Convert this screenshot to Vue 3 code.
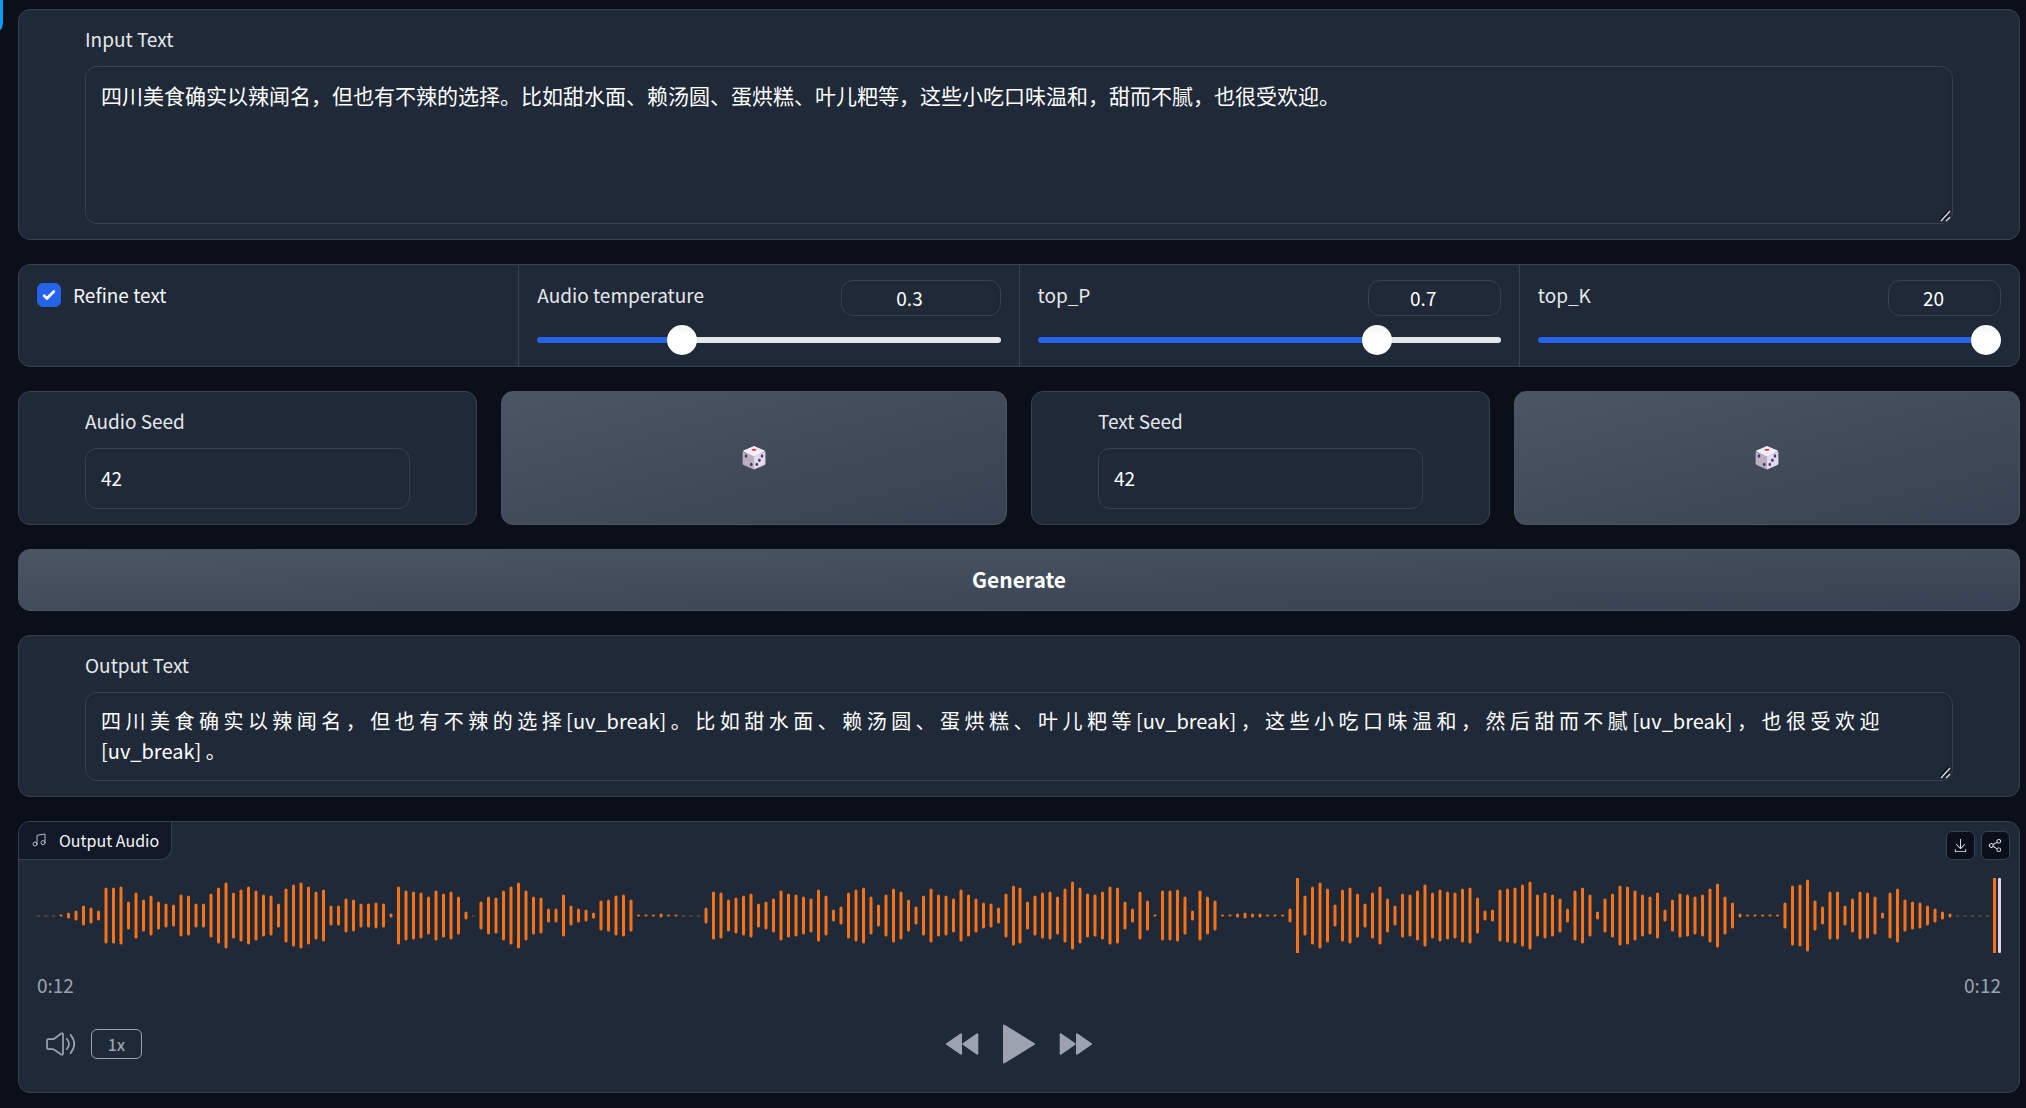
<script setup>
import { ref } from 'vue'

const inputText = ref('四川美食确实以辣闻名，但也有不辣的选择。比如甜水面、赖汤圆、蛋烘糕、叶儿粑等，这些小吃口味温和，甜而不腻，也很受欢迎。')
const outputText = ref('四 川 美 食 确 实 以 辣 闻 名 ， 但 也 有 不 辣 的 选 择 [uv_break] 。 比 如 甜 水 面 、 赖 汤 圆 、 蛋 烘 糕 、 叶 儿 粑 等 [uv_break] ， 这 些 小 吃 口 味 温 和 ， 然 后 甜 而 不 腻 [uv_break] ， 也 很 受 欢 迎 [uv_break] 。')
const refine = ref(true)
const sliders = ref([
  { id: 'temperature', label: 'Audio temperature', value: 0.3, min: 0, max: 1, step: 0.1, size: 'wide' },
  { id: 'top-p', label: 'top_P', value: 0.7, min: 0.1, max: 0.9, step: 0.1, size: 'medium' },
  { id: 'top-k', label: 'top_K', value: 20, min: 1, max: 20, step: 1, size: 'narrow' },
])
const seeds = ref([
  { id: 'audio-seed', label: 'Audio Seed', value: 42 },
  { id: 'text-seed', label: 'Text Seed', value: 42 },
])
const roll = (seed) => { seed.value = Math.floor(Math.random() * 100000000) }
const fill = (s) => `${((s.value - s.min) / (s.max - s.min)) * 100}%`

// Half-height of every bar; 0 is silence.
const peaks = [
  0, 0, 0, 1, 3, 5, 10, 8, 5, 28, 28, 29, 14, 23, 16, 20, 14, 12, 11, 21, 20, 12, 12, 22, 28, 33, 23, 26, 29, 25,
  21, 20, 12, 27, 31, 33, 29, 24, 26, 10, 10, 17, 16, 12, 12, 13, 12, 2, 29, 25, 24, 23, 19, 25, 22, 24, 19, 4, 0, 14,
  19, 18, 25, 29, 33, 25, 19, 18, 7, 7, 21, 10, 7, 6, 3, 15, 16, 20, 21, 16, 1, 1, 1, 2, 1, 1, 0, 0, 0, 8,
  24, 23, 16, 18, 20, 22, 12, 14, 17, 25, 22, 21, 19, 17, 26, 20, 6, 9, 23, 26, 28, 19, 11, 21, 27, 24, 16, 9, 20, 27,
  21, 20, 17, 26, 21, 17, 13, 12, 8, 22, 30, 28, 14, 20, 23, 24, 19, 27, 34, 28, 22, 21, 24, 29, 28, 14, 7, 24, 15, 1,
  25, 25, 26, 19, 5, 25, 19, 15, 1, 1, 2, 3, 2, 2, 1, 1, 1, 7, 38, 20, 29, 33, 27, 11, 26, 28, 22, 12, 23, 29,
  17, 10, 22, 21, 25, 31, 23, 26, 24, 23, 27, 28, 18, 5, 6, 26, 27, 28, 31, 34, 21, 23, 21, 17, 7, 25, 28, 21, 4, 17,
  22, 30, 29, 25, 21, 19, 23, 6, 16, 22, 21, 19, 21, 27, 32, 19, 13, 2, 1, 1, 1, 1, 1, 13, 30, 31, 36, 15, 9, 24,
  24, 10, 17, 24, 23, 19, 3, 23, 27, 16, 14, 13, 10, 7, 4, 2, 0, 0, 0, 0, 0, 38,
]
const tile = 131
const barX = (i) => (i < tile ? i * 7.5 : i === peaks.length - 1 ? 1956 : 981.5 + (i - tile) * 7.5)
</script>

<template>
  <main class="app">
    <span class="edge" aria-hidden="true"></span>

    <section class="card text-card">
      <label class="label" for="input-text">Input Text</label>
      <textarea id="input-text" v-model="inputText" class="field area input-area" spellcheck="false"></textarea>
    </section>

    <section class="card settings">
      <div class="cell">
        <label class="check">
          <input v-model="refine" type="checkbox" />
          <span>Refine text</span>
        </label>
      </div>
      <div v-for="s in sliders" :key="s.id" class="cell">
        <div class="cell-head">
          <label class="label" :for="s.id">{{ s.label }}</label>
          <input v-model.number="s.value" class="field number" :class="s.size" type="number" :min="s.min" :max="s.max" :step="s.step" :aria-label="s.label + ' value'" />
        </div>
        <input :id="s.id" v-model.number="s.value" class="range" type="range" :min="s.min" :max="s.max" :step="s.step" :style="{ '--fill': fill(s) }" />
      </div>
    </section>

    <section class="seeds">
      <template v-for="seed in seeds" :key="seed.id">
        <div class="card text-card">
          <label class="label" :for="seed.id">{{ seed.label }}</label>
          <input :id="seed.id" v-model="seed.value" class="field seed" type="text" />
        </div>
        <button class="button" type="button" :aria-label="'Randomize ' + seed.label" @click="roll(seed)">
          <svg class="die" viewBox="0 0 24 24" width="24" height="24">
            <path d="M12 0.5 22.5 5 12 10.5 1.5 5Z" fill="#f6effa" stroke="#f6effa" stroke-linejoin="round" />
            <path d="M.6 5.4 12 10.4V23.6L1.6 19Q.6 18.5 .6 17.5Z" fill="#b9afbf" />
            <path d="M23.4 5.4 12 10.4V23.6L22.4 19Q23.4 18.5 23.4 17.5Z" fill="#e2d9ec" />
            <ellipse cx="12" cy="3.8" rx="2.4" ry="1.1" fill="#f0383c" />
            <g fill="#4a3a72">
              <ellipse cx="4" cy="10" rx="1.3" ry="1.7" />
              <ellipse cx="9.2" cy="18.4" rx="1.3" ry="1.7" />
              <ellipse cx="20" cy="10" rx="1.3" ry="1.7" />
              <ellipse cx="17.4" cy="14.2" rx="1.3" ry="1.7" />
              <ellipse cx="14.8" cy="18.4" rx="1.3" ry="1.7" />
            </g>
          </svg>
        </button>
      </template>
    </section>

    <button class="button generate" type="button">Generate</button>

    <section class="card text-card">
      <label class="label" for="output-text">Output Text</label>
      <textarea id="output-text" v-model="outputText" class="field area output-area" spellcheck="false"></textarea>
    </section>

    <section class="card audio">
      <header class="audio-head">
        <h2 class="tag">
          <svg viewBox="0 0 24 24" width="16" height="16" fill="none" stroke="currentColor" stroke-width="1.5" stroke-linecap="round" stroke-linejoin="round">
            <path d="M9 18V5l12-2v13" /><circle cx="6" cy="18" r="3" /><circle cx="18" cy="16" r="3" />
          </svg>
          Output Audio
        </h2>
        <div class="tools">
          <button type="button" aria-label="Download">
            <svg viewBox="0 0 32 32" width="15" height="15" fill="currentColor">
              <path d="M26 24v4H6v-4H4v4a2 2 0 0 0 2 2h20a2 2 0 0 0 2-2v-4zM26 14l-1.41-1.41L17 20.17V2h-2v18.17l-7.59-7.58L6 14l10 10 10-10z" />
            </svg>
          </button>
          <button type="button" aria-label="Share">
            <svg viewBox="0 0 32 32" width="15" height="15" fill="currentColor">
              <path d="M23 20a5 5 0 0 0-3.89 1.89l-7.31-4.57a4.46 4.46 0 0 0 0-2.64l7.31-4.57A5 5 0 1 0 18 7a4.79 4.79 0 0 0 .2 1.32l-7.31 4.57a5 5 0 1 0 0 6.22l7.31 4.57A4.79 4.79 0 0 0 18 25a5 5 0 1 0 5-5zm0-16a3 3 0 1 1-3 3 3 3 0 0 1 3-3zM7 19a3 3 0 1 1 3-3 3 3 0 0 1-3 3zm16 9a3 3 0 1 1 3-3 3 3 0 0 1-3 3z" />
            </svg>
          </button>
        </div>
      </header>

      <svg class="wave" viewBox="0 0 1964 75" preserveAspectRatio="none" role="img" aria-label="Waveform">
        <rect v-for="(p, i) in peaks" :key="i" :x="barX(i)" :y="p ? 37.5 - p : 37.5" width="3" :height="p ? p * 2 : 1" :rx="p && p < 38 ? 1.5 : 0" :opacity="p ? 1 : 0.6" fill="#f97316" />
        <rect x="1961" y="0" width="3" height="75" rx="1" fill="#ddd6ee" />
      </svg>

      <div class="times"><time>0:12</time><time>0:12</time></div>

      <div class="controls">
        <div class="left">
          <button class="icon" type="button" aria-label="Volume">
            <svg viewBox="0 0 32 24" width="32" height="24" fill="none" stroke="currentColor" stroke-width="1.7" stroke-linecap="round" stroke-linejoin="round">
              <path d="M2 8.6Q2 7.2 3.4 7.2H8.5L16.2 1.5Q18 .8 18 2.4V21.6Q18 23.2 16.2 22.5L8.5 17.2H3.4Q2 17.2 2 15.8ZM21.8 6.8Q26 12 21.8 17.2M25.5 2.8Q33 12 25.5 21.2" />
            </svg>
          </button>
          <button class="speed" type="button">1x</button>
        </div>
        <div class="transport">
          <button class="icon" type="button" aria-label="Skip backward">
            <svg viewBox="0 0 34 24" width="34" height="24" fill="currentColor" stroke="currentColor" stroke-width="2" stroke-linejoin="round">
              <path d="M16 2.2V21.8L2 12ZM32.3 2.2V21.8L18.3 12Z" />
            </svg>
          </button>
          <button class="icon" type="button" aria-label="Play">
            <svg viewBox="0 0 32 40" width="32" height="40" fill="currentColor" stroke="currentColor" stroke-width="2" stroke-linejoin="round">
              <path d="M1 1.6V38.4L31 20Z" />
            </svg>
          </button>
          <button class="icon" type="button" aria-label="Skip forward">
            <svg viewBox="0 0 34 24" width="34" height="24" fill="currentColor" stroke="currentColor" stroke-width="2" stroke-linejoin="round">
              <path d="M1.7 2.2V21.8L15.7 12ZM18 2.2V21.8L32 12Z" />
            </svg>
          </button>
        </div>
        <div class="right"></div>
      </div>
    </section>
  </main>
</template>

<style>
body {
  background: #0b0f19;
}
</style>

<style scoped>
.app {
  position: relative;
  display: flex;
  flex-direction: column;
  gap: 24px;
  padding: 9px 6px 15px 18px;
  color: #fff;
  font: 19px/30px "Noto Sans CJK SC", "Noto Sans", sans-serif;
}
.app * {
  box-sizing: border-box;
}
.edge {
  position: absolute;
  top: 0;
  left: 0;
  width: 3px;
  height: 30px;
  background: #0c9cfc;
  border-bottom-right-radius: 3px 9px;
}
button,
input,
textarea {
  margin: 0;
  font: inherit;
  color: inherit;
}
button {
  padding: 0;
  cursor: pointer;
}
.card {
  background: #1f2937;
  border: 1px solid #374151;
  border-radius: 12px;
}
.label {
  display: block;
  color: #e5e7eb;
}
.text-card {
  display: flex;
  flex-direction: column;
  gap: 12px;
  padding: 14px 66px 15px;
}
.field {
  background: #1f2937;
  border: 1px solid #374151;
  border-radius: 12px;
  outline: none;
  box-shadow: inset 0 2px 4px rgba(0, 0, 0, 0.05);
}
.area {
  display: block;
  width: 100%;
  padding: 13px 15px;
  resize: vertical;
  overflow: hidden;
}
.area::-webkit-scrollbar {
  width: 15px;
  height: 15px;
}
.area::-webkit-resizer {
  background: url("data:image/svg+xml,%3Csvg viewBox='0 0 15 15' xmlns='http://www.w3.org/2000/svg' fill='none'%3E%3Cpath d='M3 12 12 2M8 12l4-4' stroke='%230b0f19' stroke-width='2'/%3E%3Cpath d='M4 13 13 3M9 13l4-4' stroke='%23d1d5db' stroke-width='1.5'/%3E%3C/svg%3E") center / 15px no-repeat;
}
.input-area {
  height: 158px;
  font-size: 21px;
  line-height: 30px;
}
.output-area {
  height: 89px;
  font-size: 20px;
  line-height: 30px;
}

.settings {
  display: flex;
  height: 103px;
}
.cell {
  flex: 1;
  padding: 15px 18px;
}
.cell + .cell {
  border-left: 1px solid #374151;
}
.check {
  display: flex;
  align-items: center;
  gap: 12px;
  color: #f3f4f6;
}
.check input {
  appearance: none;
  width: 24px;
  height: 24px;
  border-radius: 6px;
  border: 1px solid #374151;
}
.check input:checked {
  border-color: #2563eb;
  background: #2563eb url("data:image/svg+xml,%3Csvg viewBox='0 0 16 16' fill='white' xmlns='http://www.w3.org/2000/svg'%3E%3Cpath d='M12.207 4.793a1 1 0 010 1.414l-5 5a1 1 0 01-1.414 0l-2-2a1 1 0 011.414-1.414L6.5 9.086l4.293-4.293a1 1 0 011.414 0z'/%3E%3C/svg%3E") center / 100%;
}
.cell-head {
  display: flex;
  justify-content: space-between;
  align-items: flex-start;
}
.number {
  height: 36px;
  padding: 0 22px 2px 0;
  text-align: center;
  appearance: textfield;
}
.number::-webkit-inner-spin-button {
  display: none;
}
.wide {
  width: 160px;
}
.medium {
  width: 133px;
}
.narrow {
  width: 113px;
}
.range {
  display: block;
  appearance: none;
  width: 100%;
  height: 30px;
  margin-top: 9px;
  background: none;
}
.range::-webkit-slider-runnable-track {
  height: 6px;
  border-radius: 3px;
  background: linear-gradient(to right, #2563eb var(--fill), #e5e7eb var(--fill));
}
.range::-webkit-slider-thumb {
  appearance: none;
  width: 30px;
  height: 30px;
  margin-top: -12px;
  border-radius: 50%;
  background: linear-gradient(#f4f4f4, #fff 40%);
  box-shadow: 0 0 1px rgba(0, 0, 0, 0.4);
}

.seeds {
  display: grid;
  grid-template-columns: 49fr 54fr 49fr 54fr;
  gap: 24px;
}
.seed {
  width: 100%;
  height: 61px;
  padding: 0 15px 2px;
}
.button {
  display: flex;
  align-items: center;
  justify-content: center;
  border: 1px solid #4b5563;
  border-radius: 12px;
  background: linear-gradient(to bottom right, #4b5563, #374151);
}
.generate {
  height: 62px;
  padding-bottom: 2px;
  font-size: 21px;
  font-weight: 700;
}

.audio-head {
  display: flex;
  justify-content: space-between;
  align-items: flex-start;
  height: 56px;
}
.tag {
  display: flex;
  align-items: center;
  gap: 12px;
  height: 38px;
  margin: 0;
  padding: 0 12px 1px;
  background: #111827;
  border: solid #374151;
  border-width: 0 1px 1px 0;
  border-radius: 11px 0 12px 0;
  color: #f3f4f6;
  font-size: 16px;
  font-weight: 400;
}
.tag svg {
  color: #b6bbc5;
}
.tools {
  display: flex;
  gap: 6px;
  padding: 9px;
}
.tools button {
  display: grid;
  place-items: center;
  width: 29px;
  height: 29px;
  background: #0b0f19;
  border: 1px solid #374151;
  border-radius: 6px;
  color: #e5e7eb;
}
.audio {
  color: #9ca3af;
}
.wave {
  display: block;
  width: calc(100% - 36px);
  height: 75px;
  margin: 0 18px;
}
.times {
  display: flex;
  justify-content: space-between;
  padding: 0 18px;
  margin-top: 17px;
}
.controls {
  display: flex;
  align-items: center;
  height: 60px;
  margin: 14px 18px 18px;
}
.left,
.right {
  flex: 1;
  padding: 0 8px;
}
.left {
  display: flex;
  align-items: center;
  gap: 14px;
}
.icon {
  display: block;
  border: 0;
  background: none;
}
.icon svg {
  display: block;
}
.speed {
  width: 51px;
  height: 30px;
  border: 1px solid #9ca3af;
  border-radius: 6px;
  background: none;
  font-size: 16px;
  font-weight: 500;
  line-height: 28px;
}
.transport {
  display: flex;
  align-items: center;
  gap: 24px;
}
</style>
